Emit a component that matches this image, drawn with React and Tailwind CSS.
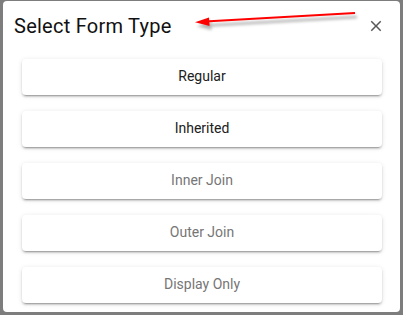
import React from "react";

const items = [
  { label: "Regular", enabled: true },
  { label: "Inherited", enabled: true },
  { label: "Inner Join", enabled: false },
  { label: "Outer Join", enabled: false },
  { label: "Display Only", enabled: false },
];

export default function App() {
  return (
    <div
      className="relative w-[403px] h-[315px] overflow-hidden bg-[#7d7d7d] pt-[1px] pl-[3px]"
      style={{ fontFamily: "Roboto, 'Liberation Sans', sans-serif" }}
    >
      <div className="relative w-[397px] h-[311px] bg-white rounded-[4px] flex flex-col">
        <div className="flex items-center justify-between pt-[9px] pl-[11px] pr-[15px]">
          <h2 className="text-[20px] leading-[32px] font-normal text-[#111111] tracking-[0.25px]">
            Select Form Type
          </h2>
          <svg width="18" height="18" viewBox="0 0 24 24" className="-mt-[1px]">
            <path
              fill="rgba(0,0,0,0.65)"
              d="M19 6.41 17.59 5 12 10.59 6.41 5 5 6.41 10.59 12 5 17.59 6.41 19 12 13.41 17.59 19 19 17.59 13.41 12z"
            />
          </svg>
        </div>
        <div className="flex flex-col gap-4 pt-[17px] pl-[19px]">
          {items.map((it) => (
            <button
              key={it.label}
              className={`w-[360px] h-[36px] rounded-[4px] bg-white text-[14px] flex items-center justify-center pb-[1px] shadow-[0px_3px_1px_-2px_rgba(0,0,0,0.2),0px_2px_2px_0px_rgba(0,0,0,0.14),0px_1px_5px_0px_rgba(0,0,0,0.12)] ${
                it.enabled ? "text-[#202020]" : "text-[#767676]"
              }`}
            >
              {it.label}
            </button>
          ))}
        </div>
      </div>
      <svg
        className="absolute left-0 top-0 pointer-events-none"
        width="403"
        height="315"
        viewBox="0 0 403 315"
      >
        <defs>
          <filter id="sh" x="-10%" y="-100%" width="120%" height="400%">
            <feGaussianBlur stdDeviation="1.5" />
          </filter>
        </defs>
        <g filter="url(#sh)" opacity="0.45" transform="translate(2,4)">
          <line x1="355" y1="13" x2="205" y2="21.5" stroke="#555" strokeWidth="2.5" />
          <polygon points="195,22.2 209,17.6 209.6,26" fill="#555" />
        </g>
        <line x1="355" y1="13" x2="205" y2="21.5" stroke="#ff0000" strokeWidth="2" />
        <polygon points="195,22.2 209,17.6 209.6,26" fill="#ff0000" />
      </svg>
    </div>
  );
}
